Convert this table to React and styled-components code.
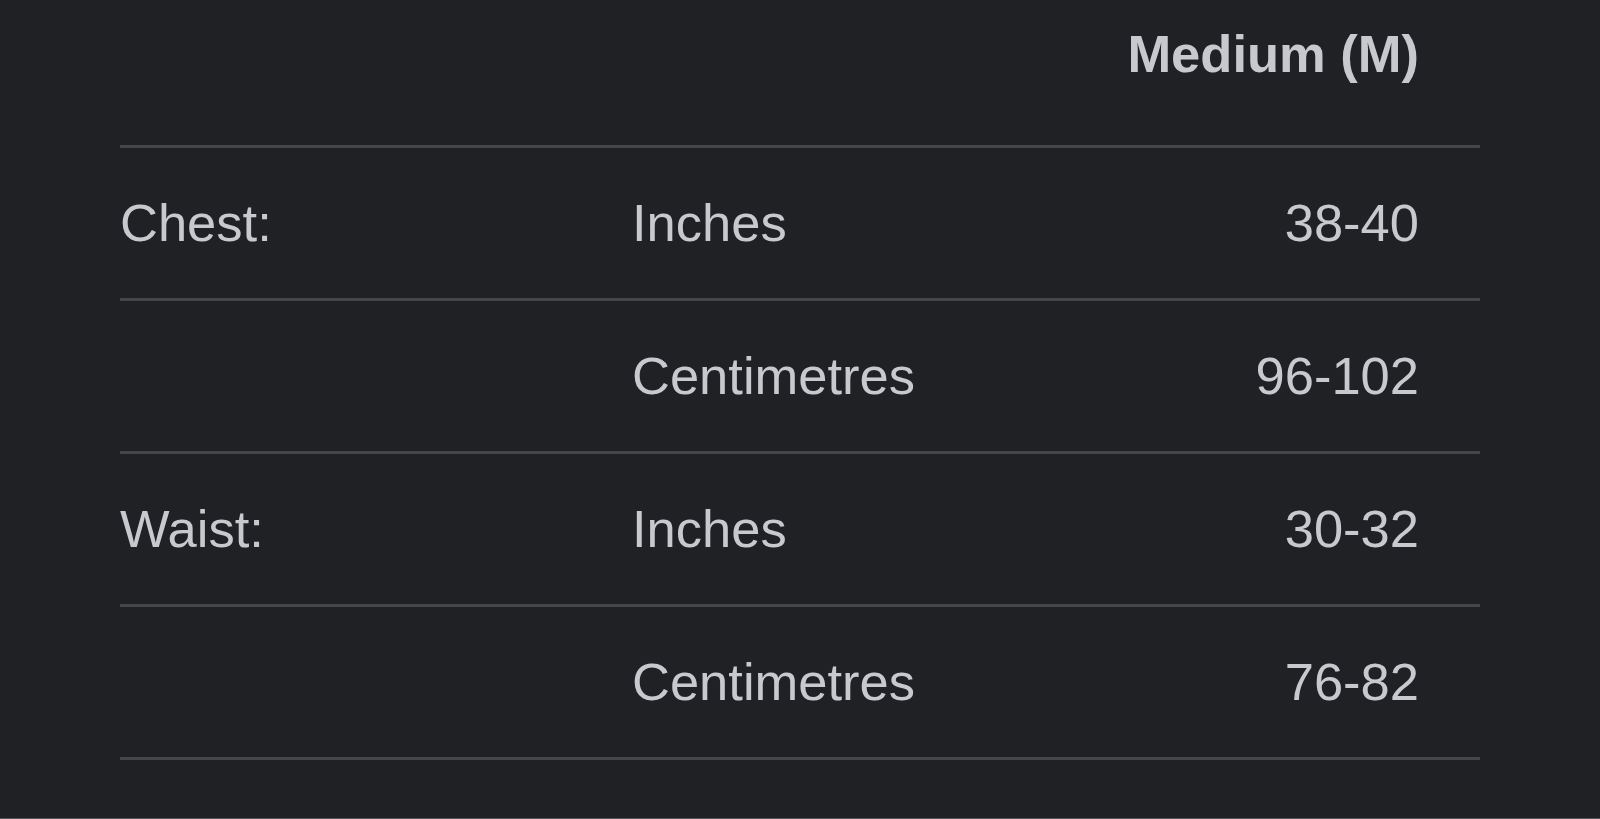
import React from 'react';
import styled, { createGlobalStyle } from 'styled-components';

const GlobalStyle = createGlobalStyle`
  html, body {
    margin: 0;
    padding: 0;
    background: #202125;
  }
  body {
    font-family: "Liberation Sans", Arial, sans-serif;
  }
`;

const Page = styled.div`
  height: 819px;
  box-sizing: border-box;
  border-bottom: 1px solid #55565a;
  background: #202125;
  padding: 0 120px;
  overflow: hidden;
`;

const Table = styled.div`
  display: flex;
  flex-direction: column;
  width: 1360px;
`;

const Row = styled.div`
  display: grid;
  grid-template-columns: 512px 1fr auto;
  align-items: ${({ header }) => (header ? 'flex-start' : 'center')};
  height: ${({ header }) => (header ? '121px' : '150px')};
  padding: ${({ header }) => (header ? '24px 61px 0 0' : '0 61px 0 0')};
  border-bottom: 3px solid #45464a;
`;

const Cell = styled.div`
  font-size: 52.5px;
  line-height: 60px;
  color: #c8c9ce;
  font-weight: ${({ bold }) => (bold ? 700 : 400)};
  text-align: ${({ right }) => (right ? 'right' : 'left')};
  white-space: nowrap;
`;

const rows = [
  { label: 'Chest:', unit: 'Inches', value: '38-40' },
  { label: '', unit: 'Centimetres', value: '96-102' },
  { label: 'Waist:', unit: 'Inches', value: '30-32' },
  { label: '', unit: 'Centimetres', value: '76-82' },
];

export default function App() {
  return (
    <>
      <GlobalStyle />
      <Page>
        <Table>
          <Row header>
            <Cell />
            <Cell />
            <Cell bold right>Medium (M)</Cell>
          </Row>
          {rows.map((r, i) => (
            <Row key={i}>
              <Cell>{r.label}</Cell>
              <Cell>{r.unit}</Cell>
              <Cell right>{r.value}</Cell>
            </Row>
          ))}
        </Table>
      </Page>
    </>
  );
}
